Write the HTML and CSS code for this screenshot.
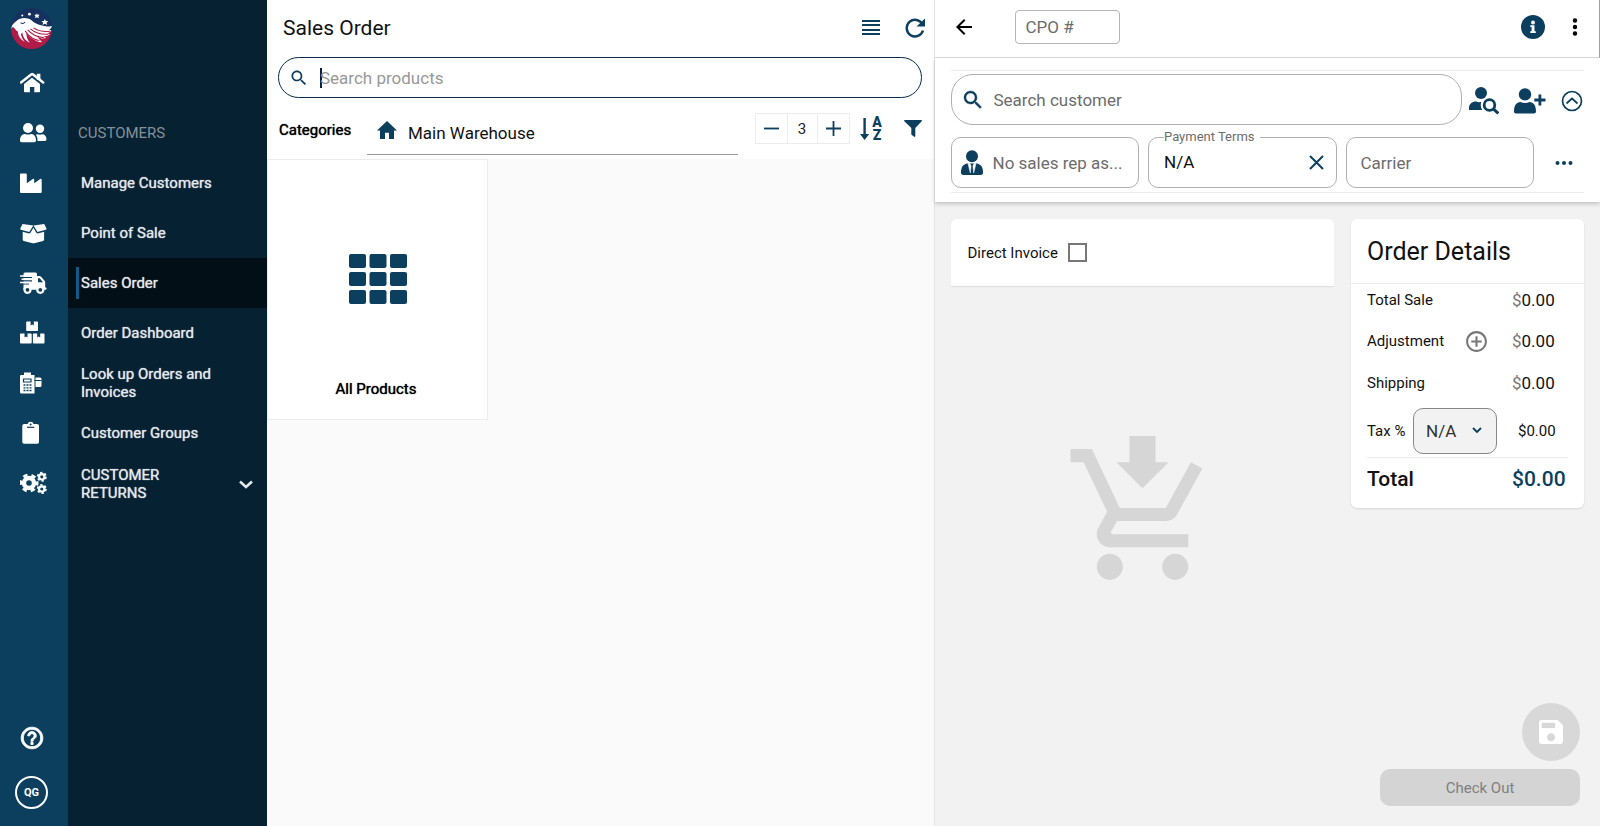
FILE: index.html
```html
<!DOCTYPE html>
<html lang="en">
<head>
<meta charset="utf-8">
<title>Sales Order</title>
<link rel="stylesheet" href="styles.css">
</head>
<body>
<div class="shell">
  <nav class="rail" aria-label="Main">
    <a class="logo" href="#" aria-label="Home page">
      <svg viewBox="35 23 120 120" width="41" height="41">
        <defs><clipPath id="disc"><circle cx="95" cy="83" r="60"/></clipPath></defs>
        <g clip-path="url(#disc)">
          <rect x="35" y="23" width="120" height="120" fill="#16315f"/>
          <path d="M35 80C60 90 120 84 155 90V143H35Z" fill="#b01c45"/>
          <path d="M36 80C40 68 45 66 52 60C62 50 82 50 94 58C102 66 114 72 126 74C138 77 148 78 155 76C154 82 150 85 146 87L153 88C150 93 146 96 140 97L149 100C144 105 136 106 130 105L138 111C130 114 120 112 112 108L126 123C108 122 92 112 80 96C80 108 84 118 90 124C78 120 70 110 68 94L64 100C67 112 71 118 75 122C64 117 56 106 55 92C50 90 46 82 42 79C39 79 38 80 36 84Z" fill="#fff"/>
          <path d="M76 90C92 112 104 116 118 118M84 87C98 104 112 108 132 110M92 84C108 98 124 101 144 100M101 81C116 91 132 93 149 91" fill="none" stroke="#b01c45" stroke-width="3"/>
          <path d="M63 66C69 70 73 68 76 64" fill="none" stroke="#16315f" stroke-width="3"/>
          <g fill="#fff">
            <circle cx="68" cy="45" r="3"/><circle cx="89" cy="41" r="4"/>
            <path d="M111 38l2 5 6 0-4 4 2 6-6-3-6 3 2-6-4-4 6 0zM134 55l3 6 7 0-5 5 2 7-7-4-7 4 2-7-5-5 7 0z"/>
          </g>
        </g>
      </svg>
    </a>
    <a class="rail-link" href="#" aria-label="Dashboard"><svg class="rail-icon" viewBox="0 0 28 24"><path d="M1 11.500L11.500 3.300a1 1 0 0 1 1.300 0L23.200 11.500" fill="none" stroke="currentColor" stroke-width="2.400" stroke-linecap="round"/><path d="M16.800 2.800h3.600v6h-3.600zM12 6.800L20 13v7.500a.8.8 0 0 1-.8.8h-4.900v-5.200H9.900v5.200H4.800a.8.8 0 0 1-.8-.8V13z"/></svg></a>
    <a class="rail-link" href="#" aria-label="Customers"><svg class="rail-icon" viewBox="0 0 28 24"><circle cx="8" cy="7" r="5"/><circle cx="20" cy="7.800" r="4.200"/><path d="M0 19.500c0-4 2-6.500 5-6.500 2 .8 4 .8 6 0 3 0 5 2.500 5 6.500 0 1-.7 1.700-1.700 1.700H1.700C.7 21.200 0 20.500 0 19.500zM17.500 19.900h7.300c1 0 1.700-.6 1.700-1.600 0-3-1.700-5-4.300-5-1.500.6-3 .6-4.500 0-.7 0-1.300.2-1.900.5 1.300 1.500 1.800 3.500 1.700 6.100z"/></svg></a>
    <a class="rail-link" href="#" aria-label="Factory"><svg class="rail-icon" viewBox="0 0 28 24"><path d="M1.200 2.500h4.600a1 1 0 0 1 1 1v8.700l6-4.300c.7-.5 1.400-.2 1.400.6v3.700l6-4.300c.7-.5 1.500-.2 1.500.6v12.200a1.200 1.200 0 0 1-1.200 1.200H1.200A1.200 1.200 0 0 1 0 20.500v-17a1 1 0 0 1 1.200-1z"/></svg></a>
    <a class="rail-link" href="#" aria-label="Inventory"><svg class="rail-icon" viewBox="0 0 28 24"><path d="M2.500 3L13.300 4.500 9.800 10.300c-.3.500-.8.700-1.300.5L.9 8.800c-.6-.2-.8-.7-.6-1.300zM24.200 3L13.500 4.500 17 10.300c.3.500.8.700 1.300.5l7.600-2c.6-.2.8-.7.6-1.300z"/><path d="M13.400 6.800l2.600 4.400c.6 1 1.600 1.400 2.700 1.100l5.400-1.500v7.800c0 .7-.4 1.200-1.100 1.400l-8.800 2.200c-.5.100-1 .1-1.500 0L3.800 20c-.7-.2-1.100-.7-1.100-1.400v-7.800l5.400 1.500c1.100.3 2.100-.1 2.700-1.100z"/></svg></a>
    <a class="rail-link" href="#" aria-label="Sales"><svg class="rail-icon" viewBox="0 0 28 24"><path d="M5 1.500h10.500a1.500 1.500 0 0 1 1.500 1.500v2h2.500c.5 0 1 .2 1.400.6l3.700 4.200c.4.400.6.900.6 1.400v5.300h.8c.7 0 .7 2.200 0 2.200H3.500V3A1.500 1.500 0 0 1 5 1.500z"/><path d="M18 7.300h1.700l3.300 3.900H18z" fill="#0c3f5e"/><path d="M2 6.500h10M2 9.800h10M2 13h7" stroke="#0c3f5e" stroke-width="1.200"/><path d="M0 5h10M1.500 8.200h10M0 11.400h10" stroke="currentColor" stroke-width="1.500"/><circle cx="7.500" cy="18.800" r="3" fill="#0c3f5e" stroke="currentColor" stroke-width="2.200"/><circle cx="20.300" cy="18.800" r="3" fill="#0c3f5e" stroke="currentColor" stroke-width="2.200"/></svg></a>
    <a class="rail-link" href="#" aria-label="Orders"><svg class="rail-icon" viewBox="0 0 28 24"><path d="M7 .5h3.600v4l1.600-1 1.600 1v-4h3.400a.8.8 0 0 1 .8.800v7.900a.8.800 0 0 1-.8.800H7a.8.800 0 0 1-.8-.8V1.300A.8.800 0 0 1 7 .5zM.8 12.500h3.700v4l1.500-1 1.500 1v-4h3.400a.8.800 0 0 1 .8.800v8.400a.8.800 0 0 1-.8.800H.8a.8.800 0 0 1-.8-.8v-8.400a.8.800 0 0 1 .8-.8zM13.700 12.500h3.500v4l1.500-1 1.500 1v-4h3.500a.8.800 0 0 1 .8.800v8.400a.8.800 0 0 1-.8.800h-10a.8.800 0 0 1-.8-.8v-8.400a.8.800 0 0 1 .8-.8z"/></svg></a>
    <a class="rail-link" href="#" aria-label="Register"><svg class="rail-icon" viewBox="0 0 28 24"><path d="M4 1.500h7v2.500h3.500v18.500H1.300A1.300 1.300 0 0 1 0 21.200V5.300A1.300 1.300 0 0 1 1.300 4H4zM15.500 6.500h4.500a1.500 1.500 0 0 1 1.500 1.500v6.500a1.500 1.500 0 0 1-1.500 1.500h-4.500z"/><path d="M3.500 8h7.500v3H3.500zM14.500 9.500h7" fill="none" stroke="#0c3f5e" stroke-width="1.200"/><path d="M3.500 14h2M6.500 14h2M9.500 14h2M3.500 16.800h2M6.500 16.800h2M9.500 16.800h2M3.500 19.500h2M6.500 19.500h2M9.500 19.500h2" stroke="#0c3f5e" stroke-width="1.300"/></svg></a>
    <a class="rail-link" href="#" aria-label="Reports"><svg class="rail-icon" viewBox="0 0 28 24"><path d="M4.200 3h3.400a3.100 3.100 0 0 1 6 0H17a2 2 0 0 1 2 2v16a1.700 1.700 0 0 1-1.700 1.700H4A1.700 1.700 0 0 1 2.300 21V5a2 2 0 0 1 1.900-2z"/><circle cx="10.600" cy="3.500" r="1" fill="#0c3f5e"/><path d="M7 6.300h7.300" stroke="#0c3f5e" stroke-width="1.200"/></svg></a>
    <a class="rail-link" href="#" aria-label="Settings"><svg class="rail-icon" viewBox="0 0 28 24"><g fill="none" stroke="currentColor"><circle cx="9" cy="12" r="5" stroke-width="4.400"/><circle cx="9" cy="12" r="8" stroke-width="3" stroke-dasharray="4.400 3.978" stroke-dashoffset="2"/><circle cx="21.800" cy="5.800" r="2.700" stroke-width="2.200"/><circle cx="21.800" cy="5.800" r="4.200" stroke-width="1.600" stroke-dasharray="2.300 2.098"/><circle cx="21.800" cy="18" r="2.700" stroke-width="2.200"/><circle cx="21.800" cy="18" r="4.200" stroke-width="1.600" stroke-dasharray="2.300 2.098"/></g></svg></a>
    <div class="rail-foot">
      <a class="help" href="#" aria-label="Help"><svg viewBox="0 0 24 24" width="26" height="26" fill="currentColor" stroke="currentColor" stroke-width=".8"><path d="M11 18h2v-2h-2v2zm1-16C6.480 2 2 6.480 2 12s4.480 10 10 10 10-4.480 10-10S17.520 2 12 2zm0 18c-4.410 0-8-3.590-8-8s3.590-8 8-8 8 3.590 8 8-3.590 8-8 8zm0-14c-2.210 0-4 1.790-4 4h2c0-1.100.9-2 2-2s2 .9 2 2c0 2-3 1.750-3 5h2c0-2.250 3-2.500 3-5 0-2.210-1.790-4-4-4z"/></svg></a>
      <button class="avatar" type="button">QG</button>
    </div>
  </nav>

  <nav class="menu" aria-label="Customers">
    <h2 class="menu-title">CUSTOMERS</h2>
    <a class="menu-link" href="#">Manage Customers</a>
    <a class="menu-link" href="#">Point of Sale</a>
    <a class="menu-link active" href="#" aria-current="page">Sales Order</a>
    <a class="menu-link" href="#">Order Dashboard</a>
    <a class="menu-link" href="#">Look up Orders and Invoices</a>
    <a class="menu-link" href="#">Customer Groups</a>
    <button class="menu-link menu-group" type="button"><span class="group-name">CUSTOMER RETURNS</span><svg viewBox="0 0 14 9" width="14" height="9" fill="none" stroke="currentColor" stroke-width="2.600"><path d="M1 1.500l6 5.500 6-5.500"/></svg></button>
  </nav>

  <main class="catalog">
    <header class="catalog-head">
      <h1 class="page-title">Sales Order</h1>
      <button class="icon-btn" type="button" aria-label="List view"><svg viewBox="0 0 18 16" width="18" height="16" fill="currentColor"><path d="M0 0h18v2H0zM0 4h18v2H0zM0 9h18v2H0zM0 13h18v2H0z"/></svg></button>
      <button class="icon-btn" type="button" aria-label="Refresh"><svg viewBox="0 0 20 20" width="20" height="20"><path d="M17.500 6.500A8.300 8.300 0 1 0 18 12.500" fill="none" stroke="currentColor" stroke-width="2.400"/><path d="M20 .5v8h-8.500z" fill="currentColor"/></svg></button>
    </header>
    <label class="product-search">
      <svg viewBox="0 0 24 24" width="20" height="20" fill="currentColor"><path d="M15.500 14h-.79l-.28-.27C15.410 12.590 16 11.110 16 9.500 16 5.910 13.090 3 9.500 3S3 5.910 3 9.500 5.910 16 9.500 16c1.610 0 3.090-.59 4.230-1.570l.27.28v.79l5 4.990L20.490 19l-4.990-5zm-6 0C7.010 14 5 11.990 5 9.500S7.010 5 9.500 5 14 7.010 14 9.500 11.990 14 9.500 14z"/></svg>
      <span class="caret"></span>
      <input type="text" placeholder="Search products" aria-label="Search products">
    </label>
    <div class="toolbar">
      <span class="toolbar-label">Categories</span>
      <a class="crumb" href="#"><svg viewBox="2 3 20 17" width="20" height="18" preserveAspectRatio="none" fill="currentColor"><path d="M10 20v-6h4v6h5v-8h3L12 3 2 12h3v8z"/></svg><span class="crumb-name">Main Warehouse</span></a>
      <div class="stepper">
        <button type="button" aria-label="Fewer columns"><svg viewBox="0 0 15 15" width="15" height="15"><path d="M0 7.500h15" stroke="currentColor" stroke-width="1.800"/></svg></button>
        <output>3</output>
        <button type="button" aria-label="More columns"><svg viewBox="0 0 15 15" width="15" height="15"><path d="M0 7.500h15M7.500 0v15" stroke="currentColor" stroke-width="1.800"/></svg></button>
      </div>
      <button class="icon-btn" type="button" aria-label="Sort A to Z"><svg class="sort" viewBox="0 -4 23 32" width="23" height="32" fill="currentColor"><path d="M3.400 1h2.400v16h3.400l-4.600 6L0 17h3.400z"/><text x="17" y="10" text-anchor="middle">A</text><text x="17" y="23" text-anchor="middle">Z</text></svg></button>
      <button class="icon-btn" type="button" aria-label="Filter"><svg viewBox="0 0 18 17" width="18" height="17" fill="currentColor"><path d="M.8 0h16.400c.7 0 1 .8.500 1.300L11.300 8v8.200c0 .7-.5 1-1 .6l-2.600-1.900a1 1 0 0 1-.4-.8V8L.3 1.300C-.2.8.1 0 .8 0z"/></svg></button>
    </div>
    <section class="tiles">
      <button class="tile" type="button">
        <svg viewBox="0 0 58 50" width="58" height="50" fill="#0c3f5e"><g id="r"><rect width="17" height="14" rx="2"/><rect x="20.500" width="17" height="14" rx="2"/><rect x="41" width="17" height="14" rx="2"/></g><use href="#r" y="18"/><use href="#r" y="36"/></svg>
        <span class="tile-name">All Products</span>
      </button>
    </section>
  </main>

  <aside class="order">
    <header class="order-head">
      <button class="icon-btn back" type="button" aria-label="Back"><svg viewBox="0 0 24 24" width="24" height="24" fill="currentColor"><path d="M20 11H7.830l5.590-5.590L12 4l-8 8 8 8 1.410-1.410L7.830 13H20v-2z"/></svg></button>
      <input class="cpo" type="text" placeholder="CPO #" aria-label="CPO #">
      <button class="icon-btn info" type="button" aria-label="Information"><svg viewBox="0 0 24 24" width="24" height="24"><circle cx="12" cy="12" r="12" fill="currentColor"/><circle cx="12" cy="7.500" r="2" fill="#fff"/><path d="M9.300 10.300h4.200v5.900h1.300V18H9.300v-1.800h1.300v-4.100H9.300z" fill="#fff"/></svg></button>
      <button class="icon-btn more" type="button" aria-label="More"><svg viewBox="0 0 6 18" width="6" height="18" fill="currentColor"><circle cx="3" cy="2.500" r="2.200"/><circle cx="3" cy="9" r="2.200"/><circle cx="3" cy="15.500" r="2.200"/></svg></button>
    </header>
    <section class="party">
      <div class="party-inner">
        <div class="row">
          <label class="field customer">
            <svg viewBox="0 0 24 24" width="24" height="24" fill="currentColor" stroke="currentColor" stroke-width=".4"><path d="M15.500 14h-.79l-.28-.27C15.410 12.590 16 11.110 16 9.500 16 5.910 13.090 3 9.500 3S3 5.910 3 9.500 5.910 16 9.500 16c1.610 0 3.090-.59 4.230-1.570l.27.28v.79l5 4.990L20.490 19l-4.990-5zm-6 0C7.010 14 5 11.990 5 9.500S7.010 5 9.500 5 14 7.010 14 9.500 11.990 14 9.500 14z"/></svg>
            <input type="text" placeholder="Search customer" aria-label="Search customer">
          </label>
          <div class="party-actions">
            <button class="icon-btn" type="button" aria-label="Find customer"><svg viewBox="0 0 30 30" width="30" height="30"><circle cx="12" cy="7" r="6" fill="currentColor"/><path d="M0 24v-2c0-4 3-6.500 7-6.500 1.800.7 3.500.8 5.200.5-.8 2.600-.5 5.500 1 8z" fill="currentColor"/><circle cx="20.500" cy="19" r="5.300" fill="none" stroke="currentColor" stroke-width="2.800"/><path d="M24.300 22.800l5 4.700" stroke="currentColor" stroke-width="3"/></svg></button>
            <button class="icon-btn" type="button" aria-label="Add customer"><svg viewBox="0 0 32 26" width="32" height="26" fill="currentColor"><circle cx="11" cy="6.400" r="6.200"/><path d="M0 23.500c0-6 2.500-9.500 6.500-9.500 3 1.200 6 1.200 9 0 4 0 6.500 3.500 6.500 9.500 0 1.200-.8 2-2 2H2c-1.200 0-2-.8-2-2zM24.500 6.500h2.800v4.100h4.200v2.800h-4.200v4.100h-2.800v-4.100h-4.200v-2.800h4.200z"/></svg></button>
            <button class="icon-btn" type="button" aria-label="Collapse"><svg viewBox="0 0 22 22" width="22" height="22" fill="none" stroke="currentColor" stroke-width="1.700"><circle cx="11" cy="11" r="9.500"/><path d="M5.500 13.500L11 8.500l5.500 5"/></svg></button>
          </div>
        </div>
        <div class="fields">
          <label class="field">
            <svg viewBox="0 0 22 25" width="22" height="25"><circle cx="11" cy="6.200" r="6" fill="currentColor"/><path d="M0 22.500c0-5 2-8.500 6.500-9h9c4.500.5 6.500 4 6.500 9 0 1.500-.8 2.500-2.200 2.500H2.200C.8 25 0 24 0 22.500z" fill="currentColor"/><path d="M7 13.500l2.300 9.500.8-7-1.100-2.500zM15 13.500L12.700 23l-.8-7 1.100-2.500z" fill="#fff" stroke="#fff" stroke-width=".5"/></svg>
            <input type="text" placeholder="No sales rep as..." aria-label="Sales rep">
          </label>
          <fieldset class="field terms">
            <legend>Payment Terms</legend>
            <input type="text" value="N/A" aria-label="Payment Terms">
            <button class="icon-btn" type="button" aria-label="Clear"><svg viewBox="0 0 15 15" width="15" height="15"><path d="M1 1l13 13M14 1L1 14" stroke="currentColor" stroke-width="2"/></svg></button>
          </fieldset>
          <label class="field plain"><input type="text" placeholder="Carrier" aria-label="Carrier"></label>
          <button class="icon-btn dots" type="button" aria-label="More fields"><svg viewBox="0 0 18 6" width="18" height="6" fill="currentColor"><circle cx="2.500" cy="3" r="2"/><circle cx="9" cy="3" r="2"/><circle cx="15.500" cy="3" r="2"/></svg></button>
        </div>
      </div>
    </section>
    <div class="order-body">
      <section class="lines">
        <label class="invoice">Direct Invoice <input type="checkbox"></label>
        <svg class="cart" viewBox="0 0 24 24" width="157" height="157" fill="#d6d6d6"><path d="M10 0h4v4h2l-4 4-4-4h2zM7 18c-1.100 0-1.990.9-1.990 2S5.900 22 7 22s2-.9 2-2-.9-2-2-2zm10 0c-1.100 0-1.990.9-1.990 2s.89 2 1.990 2 2-.9 2-2-.9-2-2-2zm-9.830-3.250l.03-.12.9-1.630h7.450c.75 0 1.410-.41 1.750-1.030l3.860-7.010L19.420 4h-.01l-1.100 2-2.760 5H8.530l-.13-.27L6.160 6l-.95-2-.94-2H1v2h2l3.600 7.590-1.350 2.450c-.16.28-.25.61-.25.96 0 1.100.9 2 2 2h12v-2H7.420c-.13 0-.25-.11-.25-.25z"/></svg>
      </section>
      <div class="side">
        <section class="details">
          <h2 class="details-title">Order Details</h2>
          <div class="sum first"><span>Total Sale</span><span class="amount"><span class="cur">$</span>0.00</span></div>
          <div class="sum"><span>Adjustment</span><button class="icon-btn plus" type="button" aria-label="Add adjustment"><svg viewBox="0 0 24 24" width="25" height="25" fill="currentColor"><path d="M13 7h-2v4H7v2h4v4h2v-4h4v-2h-4V7zm-1-5C6.480 2 2 6.480 2 12s4.480 10 10 10 10-4.480 10-10S17.520 2 12 2zm0 18c-4.410 0-8-3.590-8-8s3.590-8 8-8 8 3.590 8 8-3.590 8-8 8z"/></svg></button><span class="amount"><span class="cur">$</span>0.00</span></div>
          <div class="sum"><span>Shipping</span><span class="amount"><span class="cur">$</span>0.00</span></div>
          <div class="sum tax"><label for="tax">Tax %</label><span class="select"><select id="tax"><option>N/A</option></select><svg viewBox="0 0 10 7" width="10" height="7" fill="none" stroke="currentColor" stroke-width="1.800"><path d="M1 1l4 4 4-4"/></svg></span><span class="tax-amount">$0.00</span></div>
          <div class="sum total"><span>Total</span><span class="amount">$0.00</span></div>
        </section>
        <div class="actions">
          <button class="save" type="button" aria-label="Save" disabled><svg viewBox="0 0 24 24" width="32" height="32" fill="#fff"><path d="M17 3H5c-1.110 0-2 .9-2 2v14c0 1.100.89 2 2 2h14c1.100 0 2-.9 2-2V7l-4-4zm-5 16c-1.660 0-3-1.340-3-3s1.340-3 3-3 3 1.340 3 3-1.340 3-3 3zm3-10H5V5h10v4z"/></svg></button>
          <button class="checkout" type="button" disabled>Check Out</button>
        </div>
      </div>
    </div>
  </aside>
</div>
</body>
</html>
```
FILE: styles.css
```css
*, *::before, *::after { box-sizing: border-box; }

:root {
  --brand: #0c3f5e;
  --brand-dark: #052132;
  --line: #ececec;
}

body {
  margin: 0;
  font-family: Roboto, "Liberation Sans", sans-serif;
  font-size: 15px;
  color: #111;
}

button, input, select {
  font: inherit;
  color: inherit;
  background: none;
  border: 0;
  padding: 0;
  margin: 0;
}

input { min-width: 0; outline: 0; }
input::placeholder { color: #6c6c6c; opacity: 1; }
a { color: inherit; text-decoration: none; }
h1, h2 { margin: 0; font-weight: 400; }
svg { display: block; flex: none; }

.shell {
  display: grid;
  grid-template-columns: 68px 199px minmax(0, 1fr) minmax(0, 1fr);
  min-height: 100vh;
}

.icon-btn {
  display: flex;
  align-items: center;
  justify-content: center;
  color: var(--brand);
}

/* Icon rail */
.rail {
  display: flex;
  flex-direction: column;
  background: var(--brand);
  color: #fff;
}
.logo { padding: 8px 0 9px 11px; }
.rail-link {
  display: flex;
  align-items: center;
  height: 50px;
  padding-left: 20px;
}
.rail-icon { width: 28px; height: 24px; fill: currentColor; }
.rail-foot {
  display: flex;
  flex-direction: column;
  align-items: flex-start;
  gap: 25px;
  margin-top: auto;
  padding: 0 0 17px 15px;
}
.help { padding-left: 4px; }
.avatar {
  width: 33px;
  height: 33px;
  border: 2px solid #fff;
  border-radius: 50%;
  font-size: 11px;
  font-weight: 700;
}

/* Section menu */
.menu { background: var(--brand-dark); color: #e3e7ea; }
.menu-title {
  padding: 108px 0 0 10px;
  font-size: 15px;
  line-height: 50px;
  color: #85909a;
}
.menu-link {
  display: flex;
  align-items: center;
  width: 100%;
  height: 50px;
  padding: 0 14px 0 13px;
  font-size: 15px;
  line-height: 18px;
  text-align: left;
  text-shadow: 0 0 1px currentColor;
}
.menu-link.active {
  padding-left: 8px;
  background: #020f17;
}
.menu-link.active::before {
  content: "";
  width: 3px;
  height: 32px;
  margin-right: 2px;
  background: #115a87;
}
.menu-group { justify-content: space-between; height: 52px; }
.group-name { width: 90px; }

/* Catalog */
.catalog { display: flex; flex-direction: column; }
.catalog-head {
  display: flex;
  align-items: center;
  gap: 25px;
  height: 57px;
  padding: 0 9px 2px 16px;
}
.page-title { flex: 1; font-size: 21px; }
.product-search {
  display: flex;
  align-items: center;
  height: 41px;
  margin: 0 12px 0 11px;
  padding: 0 16px 0 10px;
  border: 1px solid #06284a;
  border-radius: 21px;
  font-size: 17px;
  color: var(--brand);
}
.product-search input { flex: 1; }
.product-search input::placeholder { color: #989898; }
.caret { width: 2px; height: 20px; margin: 0 -2px 0 11px; background: #0b1d45; }
.toolbar {
  display: flex;
  align-items: center;
  height: 61px;
  padding: 0 12px 0 12px;
}
.toolbar-label { width: 88px; padding-top: 2px; color: #000; text-shadow: 0 0 1px currentColor; }
.crumb {
  display: flex;
  align-items: center;
  flex: 1;
  align-self: flex-end;
  height: 41px;
  margin: 0 17px 4px 0;
  padding: 0 0 8px 10px;
  gap: 11px;
  border-bottom: 1px solid #999;
  font-size: 17px;
}
.crumb svg { color: var(--brand); }
.crumb-name { padding-top: 6px; }
.stepper {
  display: grid;
  grid-template-columns: repeat(3, 31px);
  height: 31px;
  margin-right: 10px;
  border: 1px solid var(--line);
}
.stepper > * {
  display: flex;
  align-items: center;
  justify-content: center;
  color: var(--brand);
}
.stepper output { border: solid var(--line); border-width: 0 1px; color: #222; }
.toolbar .icon-btn + .icon-btn { margin-left: 21px; }
.sort text { font-size: 14px; font-weight: 900; }
.tiles { flex: 1; background: #fafafa; }
.tile {
  display: flex;
  flex-direction: column;
  align-items: center;
  width: 221px;
  height: 261px;
  padding-top: 94px;
  background: #fff;
  border: 1px solid var(--line);
}
.tile-name {
  margin-top: auto;
  padding: 0 3px 21px 0;
  color: #000;
  text-shadow: 0 0 1px currentColor;
}

/* Order panel */
.order {
  display: flex;
  flex-direction: column;
  border-left: 1px solid #e4e4e4;
  background: #f2f2f2;
}
.order-head {
  display: flex;
  align-items: center;
  height: 58px;
  padding: 0 21px 3px 17px;
  border-right: 1px solid #f77c74;
  border-bottom: 1px solid #dadada;
  background: #fff;
}
.back { color: #000; }
.cpo {
  width: 105px;
  height: 34px;
  margin: 0 auto 0 39px;
  padding: 0 10px;
  border: 1px solid #b5b5b5;
  border-radius: 4px;
  font-size: 17px;
}
.more { margin-left: 27px; color: #000; }
.party {
  padding: 12px 16px 9px;
  background: #fff;
  box-shadow: 0 2px 4px rgba(0, 0, 0, .2);
}
.party-inner {
  display: grid;
  gap: 5px;
  padding: 3px 0 4px;
  border: solid var(--line);
  border-width: 1px 0;
}
.row { display: flex; align-items: stretch; }
.field {
  display: flex;
  align-items: center;
  min-width: 0;
  height: 51px;
  margin: 0;
  padding: 0 10px 0 9px;
  gap: 10px;
  border: 1px solid #b0b0b0;
  border-radius: 10px;
  font-size: 17px;
  color: var(--brand);
}
.field input { flex: 1; width: 100%; }
.customer { flex: 1; gap: 9px; border-radius: 22px; }
.party-actions {
  display: flex;
  align-items: center;
  justify-content: space-between;
  width: 122px;
  padding: 2px 1px 0 7px;
}
.fields {
  display: grid;
  grid-template-columns: repeat(3, minmax(0, 1fr)) 41px;
  gap: 9px;
  align-items: end;
}
.terms { height: 58px; padding: 0 12px 7px 15px; }
.terms legend { padding: 0 5px 0 0; font-size: 13px; line-height: 14px; color: #6c6c6c; }
.terms input { color: #111; }
.plain { padding-left: 14px; }
.dots { height: 50px; }

.order-body {
  display: flex;
  flex: 1;
  gap: 17px;
  padding: 17px 16px 20px;
}
.lines { flex: 1; }
.invoice {
  display: flex;
  align-items: center;
  gap: 10px;
  height: 67px;
  padding-left: 17px;
  border-radius: 6px 6px 0 0;
  background: #fff;
  box-shadow: 0 1px 1px rgba(0, 0, 0, .08);
}
.invoice input {
  appearance: none;
  width: 19px;
  height: 19px;
  border: 2px solid #777;
}
.cart { margin: 150px auto 0; }
.side { display: flex; flex-direction: column; width: 233px; }
.details {
  padding-bottom: 8px;
  border-radius: 6px;
  background: #fff;
  box-shadow: 0 1px 2px rgba(0, 0, 0, .12);
}
.details-title {
  padding: 2px 0 0 16px;
  border-bottom: 1px solid var(--line);
  font-size: 25px;
  line-height: 62px;
}
.sum {
  display: flex;
  align-items: center;
  justify-content: space-between;
  height: 42px;
  margin: 0 16px;
}
.first { height: 36px; padding-bottom: 4px; }
.sum > :first-child { flex: 1; }
.amount { width: 56px; font-size: 17px; }
.cur { color: #777; }
.plus { margin-right: 23px; color: #777; }
.tax { height: 54px; border-bottom: 1px solid var(--line); }
.select {
  position: relative;
  display: flex;
  align-items: center;
  color: var(--brand);
}
.select select {
  appearance: none;
  width: 84px;
  height: 46px;
  padding-left: 12px;
  border: 1px solid #888;
  border-radius: 10px;
  background: #f2f2f2;
  font-size: 17px;
  color: #333;
}
.select svg { position: absolute; right: 15px; pointer-events: none; }
.tax-amount { width: 71px; padding-left: 21px; }
.total { font-size: 21px; font-weight: 500; }
.total .amount { font-size: 21px; color: var(--brand); }

.actions {
  display: flex;
  flex-direction: column;
  align-items: flex-end;
  gap: 8px;
  margin-top: auto;
  padding-right: 4px;
}
.save {
  display: flex;
  align-items: center;
  justify-content: center;
  width: 58px;
  height: 58px;
  border-radius: 50%;
  background: #d8d8d8;
}
.checkout {
  width: 200px;
  height: 37px;
  border-radius: 10px;
  background: #d4d4d4;
  color: #808080;
}
```
